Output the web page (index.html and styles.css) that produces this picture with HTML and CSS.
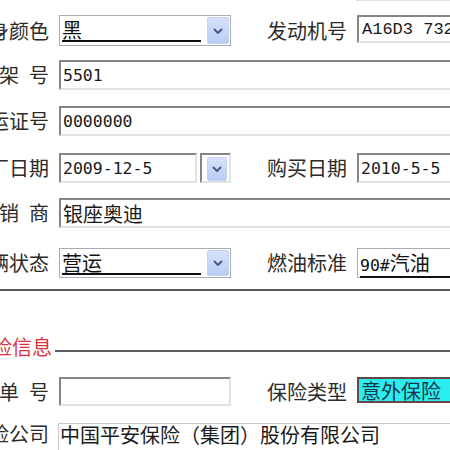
FILE: index.html
```html
<!DOCTYPE html>
<html lang="zh-CN">
<head>
<meta charset="utf-8">
<title>车辆信息</title>
<link rel="stylesheet" href="styles.css">
</head>
<body>
<div class="form">
  <div class="row r0">
    <div class="lbl"></div>
    <div class="cell-l"></div>
    <div class="lbl lbl-r"></div>
    <div class="cell-r"><div class="inp"></div></div>
  </div>

  <div class="row r1">
    <div class="lbl">车身颜色</div>
    <div class="cell-l">
      <div class="select">
        <div class="sel-text"><span class="sel-val">黑</span></div>
        <div class="sel-btn"><svg width="10" height="6" viewBox="0 0 10 6"><polyline points="1,1 5,5 9,1" fill="none" stroke="#4a5a86" stroke-width="2"/></svg></div>
      </div>
    </div>
    <div class="lbl lbl-r">发动机号</div>
    <div class="cell-r"><div class="inp short"><span class="mono">A16D3 732</span></div></div>
  </div>

  <div class="row r2">
    <div class="lbl">车 架 号</div>
    <div class="cell-wide"><div class="inp"><span class="lat">5501</span></div></div>
  </div>

  <div class="row r3">
    <div class="lbl">营运证号</div>
    <div class="cell-wide"><div class="inp"><span class="lat">0000000</span></div></div>
  </div>

  <div class="row r4">
    <div class="lbl">出厂日期</div>
    <div class="cell-l">
      <div class="dd">
        <div class="inp"><span class="lat">2009-12-5</span></div>
        <div class="dd-box">
          <div class="sel-btn"><svg width="10" height="6" viewBox="0 0 10 6"><polyline points="1,1 5,5 9,1" fill="none" stroke="#4a5a86" stroke-width="2"/></svg></div>
        </div>
      </div>
    </div>
    <div class="lbl lbl-r">购买日期</div>
    <div class="cell-r"><div class="inp"><span class="lat">2010-5-5</span></div></div>
  </div>

  <div class="row r5">
    <div class="lbl">经 销 商</div>
    <div class="cell-wide"><div class="inp">银座奥迪</div></div>
  </div>

  <div class="row r6">
    <div class="lbl">车辆状态</div>
    <div class="cell-l">
      <div class="select">
        <div class="sel-text"><span class="sel-val">营运</span></div>
        <div class="sel-btn"><svg width="10" height="6" viewBox="0 0 10 6"><polyline points="1,1 5,5 9,1" fill="none" stroke="#4a5a86" stroke-width="2"/></svg></div>
      </div>
    </div>
    <div class="lbl lbl-r">燃油标准</div>
    <div class="cell-r">
      <div class="select">
        <div class="sel-text"><span class="sel-val"><span class="lat">90#</span>汽油</span></div>
        <div class="sel-btn"><svg width="10" height="6" viewBox="0 0 10 6"><polyline points="1,1 5,5 9,1" fill="none" stroke="#4a5a86" stroke-width="2"/></svg></div>
      </div>
    </div>
  </div>

  <div class="sep"></div>

  <div class="sec-head">
    <div class="sec-title">保险信息</div>
    <div class="sec-line"></div>
  </div>

  <div class="row r7">
    <div class="lbl">保 单 号</div>
    <div class="cell-l"><div class="inp"></div></div>
    <div class="lbl lbl-r">保险类型</div>
    <div class="cell-r"><div class="cyan">意外保险</div></div>
  </div>

  <div class="row r8">
    <div class="lbl">保险公司</div>
    <div class="cell-wide"><div class="flat">中国平安保险（集团）股份有限公司</div></div>
  </div>
</div>
</body>
</html>
```

FILE: styles.css
```css
html, body {
  margin: 0;
  overflow: hidden;
  background: #ffffff;
}

body {
  width: 450px;
  height: 450px;
  font-family: "Noto Sans CJK SC", sans-serif;
  color: #222;
}

.form {
  margin-left: -31px;
  width: 640px;
}

.row {
  display: flex;
  align-items: center;
  height: 30px;
}

.r0 { margin-top: -30px; height: 31px; }
.r1 { margin-top: 14px; height: 31px; }
.r2 { margin-top: 14px; }
.r3 { margin-top: 16px; }
.r4 { margin-top: 17px; }
.r5 { margin-top: 15px; }
.r6 { margin-top: 20px; }
.r7 { margin-top: 18px; height: 29px; }
.r8 { margin-top: 17px; align-items: flex-start; }

.lbl {
  flex: none;
  width: 80px;
  font-size: 20px;
  line-height: 24px;
  text-align: justify;
  text-align-last: justify;
  color: #2b2b2b;
}

.r8 .lbl { line-height: 22px; }

.lbl-r { margin-left: 36px; }

.cell-l {
  flex: none;
  width: 172px;
  margin-left: 10px;
  height: 100%;
}

.cell-r {
  flex: none;
  width: 170px;
  margin-left: 10px;
  height: 100%;
}

.cell-wide {
  flex: none;
  width: 540px;
  margin-left: 10px;
  height: 100%;
}

.inp {
  box-sizing: border-box;
  height: 100%;
  border: 2px solid;
  border-color: #858585 #e2e2e2 #e2e2e2 #858585;
  background: #fff;
  display: flex;
  align-items: center;
  padding: 0 2px;
  font-size: 20px;
  color: #1a1a1a;
  white-space: nowrap;
}

.inp.short { height: 28px; }

.lat {
  font-family: "DejaVu Sans Mono", monospace;
  font-size: 16.5px;
}

.mono {
  font-family: "Liberation Mono", monospace;
  font-size: 17px;
  padding-left: 1px;
}

.select {
  box-sizing: border-box;
  height: 100%;
  border: 1px solid #a7adb6;
  background: #fff;
  display: flex;
}

.sel-text {
  flex: 1;
  min-width: 0;
  padding: 3px 3px 0 2px;
}

.sel-val {
  display: block;
  font-size: 20px;
  line-height: 21px;
  border-bottom: 2px solid #111;
  color: #111;
  white-space: nowrap;
}

.sel-btn {
  flex: none;
  box-sizing: border-box;
  width: 22px;
  margin: 1px 1px 1px 3px;
  background: linear-gradient(#d6e2fb, #bacdf6);
  border: 1px solid #c5d3f3;
  border-radius: 2px;
  display: flex;
  align-items: center;
  justify-content: center;
}

.dd {
  display: flex;
  gap: 3px;
  height: 100%;
}

.dd .inp {
  flex: none;
  width: 138px;
}

.dd-box {
  flex: none;
  box-sizing: border-box;
  width: 31px;
  border: 2px solid;
  border-color: #858585 #e2e2e2 #e2e2e2 #858585;
  padding: 2px 2px 0 5px;
  display: flex;
}

.dd-box .sel-btn {
  margin: 0;
  width: auto;
  flex: 1;
}

.sep {
  margin-top: 11px;
  height: 2px;
  background: #5a5a5a;
}

.sec-head {
  margin-top: 44px;
  height: 24px;
  display: flex;
  align-items: center;
}

.sec-title {
  flex: none;
  margin-left: 3px;
  width: 80px;
  font-size: 20px;
  line-height: 24px;
  color: #d9363f;
}

.sec-line {
  flex: 1;
  height: 2px;
  background: #5e5e5e;
  margin: 8px 0 0 3px;
}

.cyan {
  box-sizing: border-box;
  height: 26px;
  border: 2px solid #684646;
  background: #2aeeee;
  display: flex;
  align-items: center;
  padding: 0 2px;
  font-size: 20px;
  color: #17344a;
  white-space: nowrap;
}

.flat {
  box-sizing: border-box;
  height: 30px;
  margin-left: -1px;
  border: 1px solid #c8c8c8;
  border-right: none;
  background: #fff;
  padding: 0 1px;
  font-size: 20px;
  line-height: 22px;
  color: #1a1a1a;
  white-space: nowrap;
}
```
